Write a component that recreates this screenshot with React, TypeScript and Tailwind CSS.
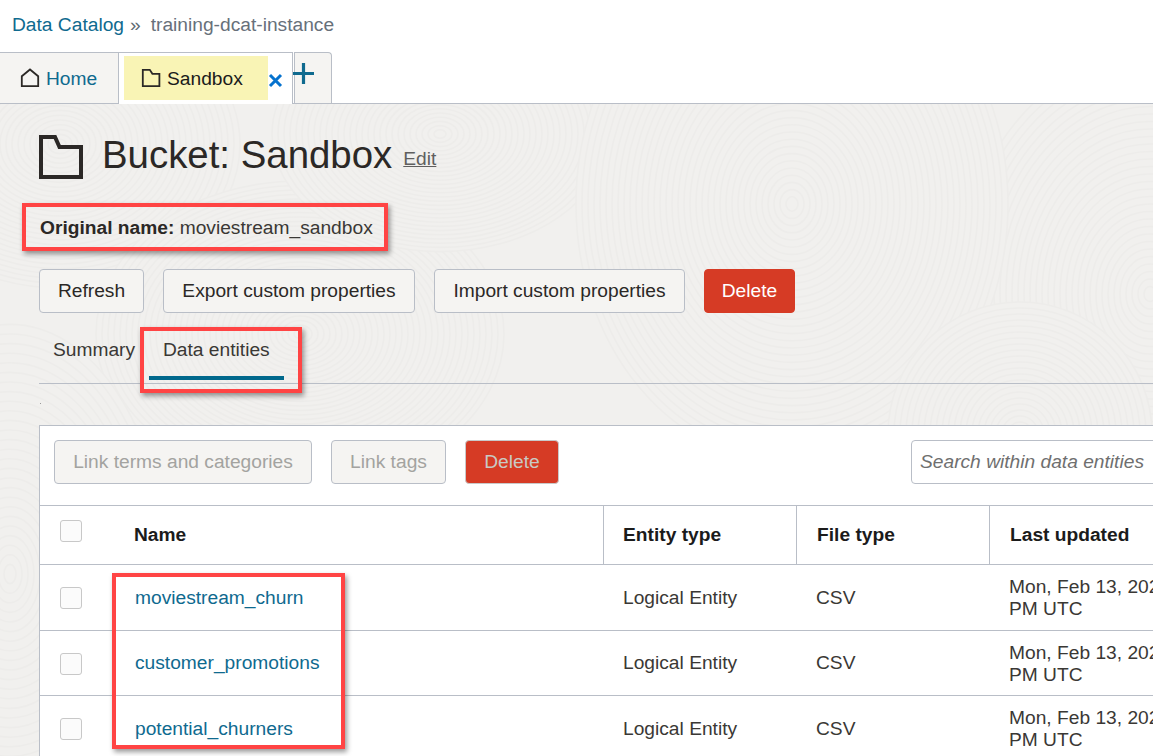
import React from 'react';

const rows = ['moviestream_churn', 'customer_promotions', 'potential_churners'];

// fingerprint swirls of the page background: [cx, cy, stretch, rings]
const swirls = [
  [1150, 190, 1.25, 32],
  [60, 40, 0.8, 30],
  [300, 230, 0.75, 34],
  [10, 470, 1.6, 26],
  [440, 30, 0.7, 28],
  [792, 100, 1.2, 36],
  [1020, 330, 1, 22],
];

function Btn({ label, w, red, dim }: { label: string; w: string; red?: boolean; dim?: boolean }) {
  const tone = red
    ? dim
      ? 'bg-[#d63b25] border-[#c9c9c9] text-[#c9c9c4]'
      : 'bg-[#d63b25] border-[#d63b25] text-white'
    : dim
      ? 'bg-[#f5f4f2] border-[#b9bec7] text-[#a3a3a0]'
      : 'bg-[#f5f4f2] border-[#b9bec7] text-[#2b2826]';
  return (
    <button className={`${w} ${tone} h-[44px] shrink-0 rounded border text-[19.2px]`}>{label}</button>
  );
}

function Checkbox() {
  return <div className="w-[22px] h-[22px] rounded-[3px] border border-[#c8c8c8] bg-[#fbfbfb]" />;
}

// red annotation boxes drawn on top of the screenshot
function Mark({ cls }: { cls: string }) {
  return (
    <div className={`absolute border-4 border-[#ff4444] shadow-[2px_3px_5px_rgba(0,0,0,0.4)] ${cls}`} />
  );
}

export default function App() {
  return (
    <div
      className="relative w-[1153px] h-[756px] overflow-hidden bg-white"
      style={{ fontFamily: '"Liberation Sans", Arial, sans-serif' }}
    >
      {/* breadcrumb */}
      <div className="h-[52px] pl-[12px] pt-[13px] text-[19.2px] leading-[24px] flex">
        <span className="text-[#0f6a8f]">Data Catalog</span>
        <span className="ml-[6px] text-[#5f6b73]">»</span>
        <span className="ml-[10px] text-[#67707a]">training-dcat-instance</span>
      </div>

      {/* tabs */}
      <div className="h-[52px] flex items-stretch border-b border-[#b9bec7]">
        <div className="w-[119px] bg-[#f5f4f2] border-t border-r border-[#b9bec7] flex items-center pl-[20px] gap-[6px] text-[19.2px] text-[#0f6a8f]">
          <svg width="20" height="20" viewBox="0 0 20 20" fill="none" stroke="#2b2826" strokeWidth="1.8">
            <path d="M1.8 18.2V8.2L10 1.5l8.2 6.7v10z" />
          </svg>
          <span className="pt-[2px]">Home</span>
        </div>
        <div className="relative w-[174px] h-[52px] bg-white border-t border-r border-[#b9bec7] flex">
          <div className="ml-[5px] mt-[3px] w-[144px] h-[44px] bg-[#f9f4b5] flex items-center pl-[17px] gap-[6px] text-[19.2px] text-[#1b1b1b]">
            <svg width="20" height="20" viewBox="0 0 20 20" fill="none" stroke="#2b2826" strokeWidth="1.8">
              <path d="M1.8 1.8h7l2.6 4h7v12.4H1.8z" />
            </svg>
            <span className="pt-[2px]">Sandbox</span>
          </div>
          <svg className="mt-[20px]" width="15" height="15" viewBox="0 0 15 15" stroke="#0572ce" strokeWidth="3">
            <path d="M2 2l11 11M13 2L2 13" />
          </svg>
        </div>
        <div className="ml-px w-[38px] bg-[#f5f4f2] border-t border-r border-[#b9bec7] rounded-tr-[4px] border-l">
          <svg className="-ml-[2px] mt-[10px]" width="21" height="21" viewBox="0 0 21 21" stroke="#0f6a8f" strokeWidth="3.2">
            <path d="M0 10.5h21M10.5 0v21" />
          </svg>
        </div>
      </div>

      {/* page body */}
      <div className="relative h-[652px] bg-[#f1f0ee] pl-[39px] pt-[31px]">
        {/* faint fingerprint texture */}
        <svg className="absolute inset-0" width="1153" height="652" fill="#f1f0ee" stroke="#edecea" strokeWidth="1.6">
          {swirls.map(([cx, cy, k, n]) =>
            Array.from({ length: n }, (_, i) => {
              const r = (n - i) * 6;
              return <ellipse key={`${cx}-${i}`} cx={cx} cy={cy} rx={r} ry={r * k} />;
            }),
          )}
        </svg>

        <div className="relative">
          <div className="flex items-center h-[44px]">
            <svg width="44" height="44" viewBox="0 0 44 44" fill="none" stroke="#2b2826" strokeWidth="4">
              <path d="M2 2h14l4.5 10H42v30H2z" />
            </svg>
            <h1 className="ml-[19px] mb-[4px] text-[38.4px] leading-[44px] text-[#2b2826]">Bucket: Sandbox</h1>
            <span className="ml-[11px] mt-[4px] text-[19.2px] text-[#5f5f5f] underline">Edit</span>
          </div>

          <div className="mt-[37px] h-[24px] pl-px text-[19.2px] leading-[24px] text-[#2b2826]">
            <b>Original name:</b> <span className="text-[#3a3835]">moviestream_sandbox</span>
          </div>

          <div className="mt-[29px] flex gap-[19px]">
            <Btn label="Refresh" w="w-[105px]" />
            <Btn label="Export custom properties" w="w-[252px]" />
            <Btn label="Import custom properties" w="w-[251px]" />
            <Btn label="Delete" w="w-[91px]" red />
          </div>

          {/* sub tabs */}
          <div className="mt-[14px] h-[57px] border-b border-[#b9bec7] flex text-[19.2px] text-[#3a3835]">
            <span className="ml-[14px] mt-[11px] w-[82px] leading-[24px]">Summary</span>
            <div className="ml-[14px] w-[135px] h-[53px] border-b-4 border-[#00688c] pl-[14px] pt-[11px] leading-[24px]">
              Data entities
            </div>
          </div>
          <div className="mt-[19px] ml-px w-px h-px bg-[#9a9a9a]" />

          {/* table panel */}
          <div className="mt-[21px] bg-white border-l border-t border-[#b9bec7] h-[400px]">
            <div className="h-[80px] border-b border-[#b9bec7] pl-[14px] pt-[14px] flex gap-[19px]">
              <Btn label="Link terms and categories" w="w-[258px]" dim />
              <Btn label="Link tags" w="w-[115px]" dim />
              <Btn label="Delete" w="w-[94px]" red dim />
              <div className="ml-[333px] w-[300px] h-[44px] shrink-0 rounded border border-[#b9bec7] pl-[8px] leading-[42px] text-[19.2px] italic text-[#6f6f6f]">
                Search within data entities
              </div>
            </div>

            <div className="h-[59px] border-b border-[#b9bec7] flex text-[19.2px] font-bold text-[#1b1b1b]">
              <div className="w-[563px] shrink-0 flex items-center">
                <div className="ml-[20px] mb-[8px]"><Checkbox /></div>
                <span className="ml-[52px]">Name</span>
              </div>
              <div className="w-[193px] shrink-0 border-l border-[#b9bec7] pl-[19px] flex items-center">Entity type</div>
              <div className="w-[193px] shrink-0 border-l border-[#b9bec7] pl-[20px] flex items-center">File type</div>
              <div className="w-[164px] shrink-0 border-l border-[#b9bec7] pl-[20px] flex items-center whitespace-nowrap">Last updated</div>
            </div>

            {rows.map((name) => (
              <div key={name} className="h-[65.5px] pt-[2px] border-b border-[#b9bec7] flex items-center text-[19.2px] text-[#3a3835]">
                <div className="w-[563px] shrink-0 flex items-center">
                  <div className="ml-[20px]"><Checkbox /></div>
                  <span className="ml-[53px] text-[#0f6a8f]">{name}</span>
                </div>
                <div className="w-[193px] shrink-0 pl-[20px]">Logical Entity</div>
                <div className="w-[193px] shrink-0 pl-[20px]">CSV</div>
                <div className="w-[164px] shrink-0 pl-[20px] leading-[22px] whitespace-nowrap">
                  Mon, Feb 13, 2023
                  <br />
                  PM UTC
                </div>
              </div>
            ))}
          </div>
        </div>
      </div>

      <Mark cls="left-[22px] top-[203px] w-[366px] h-[48px]" />
      <Mark cls="left-[140px] top-[327px] w-[162px] h-[66px]" />
      <Mark cls="left-[112px] top-[573px] w-[233px] h-[176px]" />
    </div>
  );
}
